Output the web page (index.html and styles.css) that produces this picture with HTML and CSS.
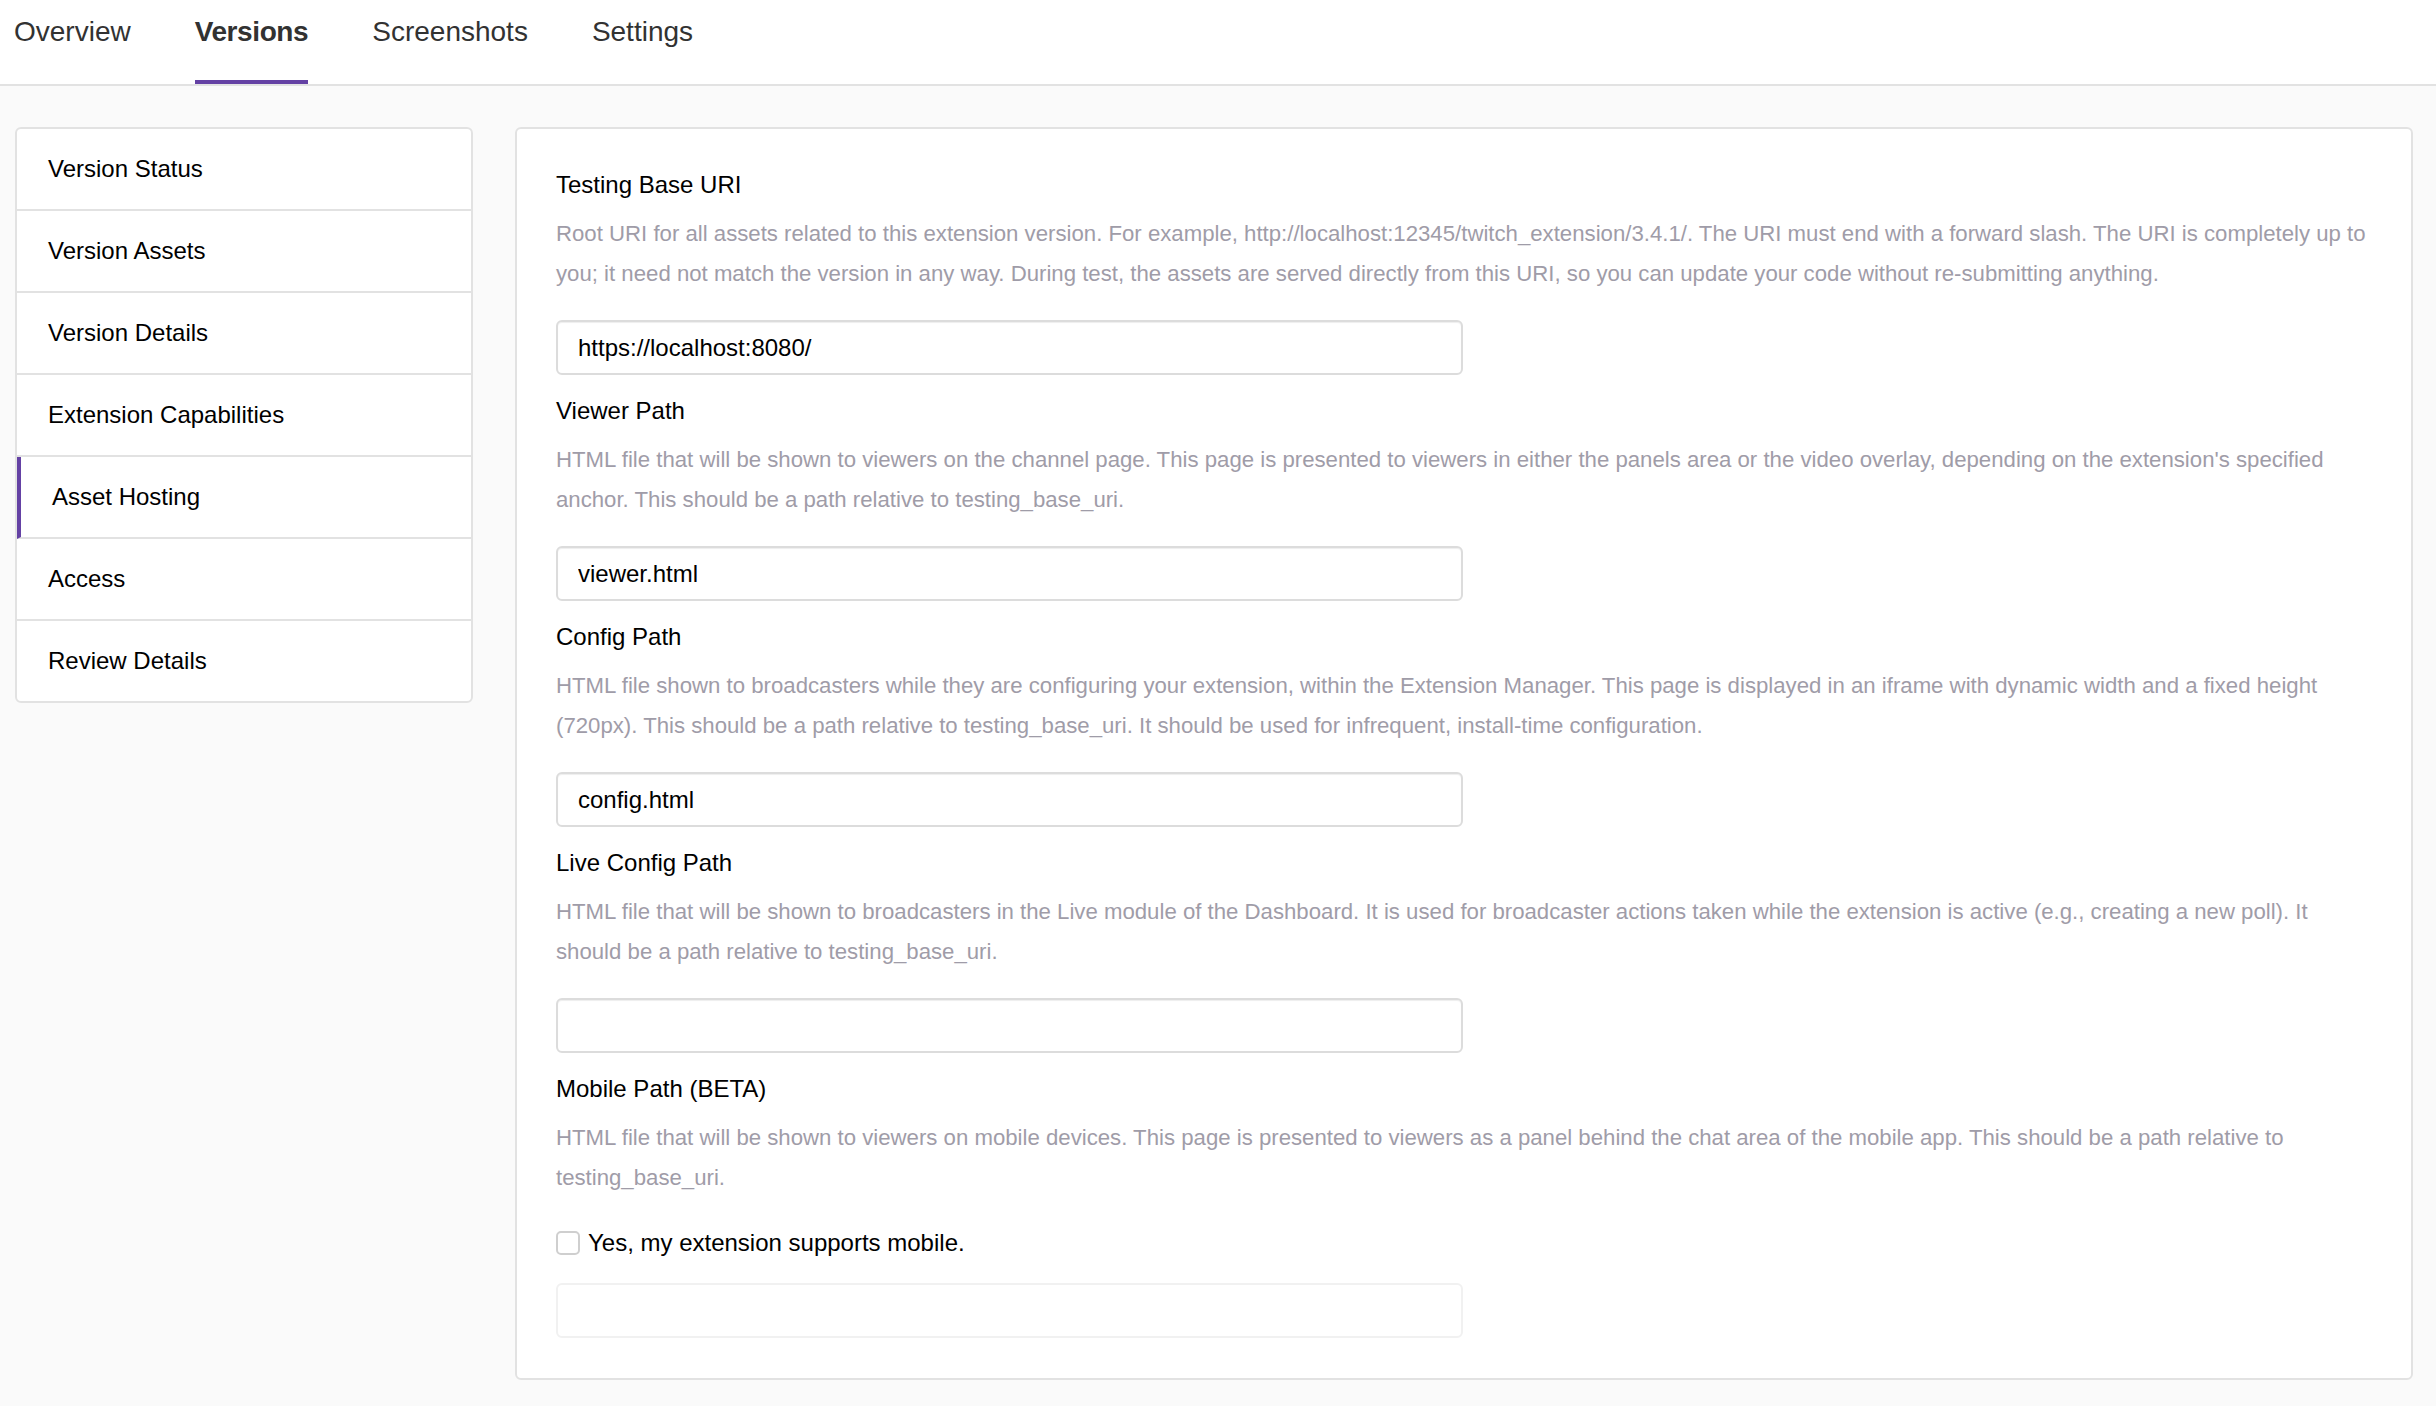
FILE: index.html
```html
<!DOCTYPE html>
<html lang="en">
<head>
<meta charset="utf-8">
<title>Versions - Asset Hosting</title>
<link rel="stylesheet" href="styles.css">
</head>
<body>
<nav class="tabs">
  <a class="tab">Overview</a>
  <a class="tab active">Versions</a>
  <a class="tab">Screenshots</a>
  <a class="tab">Settings</a>
</nav>
<div class="layout">
  <ul class="sidenav">
    <li class="side-item">Version Status</li>
    <li class="side-item">Version Assets</li>
    <li class="side-item">Version Details</li>
    <li class="side-item">Extension Capabilities</li>
    <li class="side-item active">Asset Hosting</li>
    <li class="side-item">Access</li>
    <li class="side-item">Review Details</li>
  </ul>
  <main class="panel">
    <section class="field">
      <div class="field-label">Testing Base URI</div>
      <p class="field-desc">Root URI for all assets related to this extension version. For example, http://localhost:12345/twitch_extension/3.4.1/. The URI must end with a forward slash. The URI is completely up to you; it need not match the version in any way. During test, the assets are served directly from this URI, so you can update your code without re-submitting anything.</p>
      <input class="text-input" type="text" value="https://localhost:8080/">
    </section>
    <section class="field">
      <div class="field-label">Viewer Path</div>
      <p class="field-desc">HTML file that will be shown to viewers on the channel page. This page is presented to viewers in either the panels area or the video overlay, depending on the extension's specified anchor. This should be a path relative to testing_base_uri.</p>
      <input class="text-input" type="text" value="viewer.html">
    </section>
    <section class="field">
      <div class="field-label">Config Path</div>
      <p class="field-desc">HTML file shown to broadcasters while they are configuring your extension, within the Extension Manager. This page is displayed in an iframe with dynamic width and a fixed height (720px). This should be a path relative to testing_base_uri. It should be used for infrequent, install-time configuration.</p>
      <input class="text-input" type="text" value="config.html">
    </section>
    <section class="field">
      <div class="field-label">Live Config Path</div>
      <p class="field-desc">HTML file that will be shown to broadcasters in the Live module of the Dashboard. It is used for broadcaster actions taken while the extension is active (e.g., creating a new poll). It should be a path relative to testing_base_uri.</p>
      <input class="text-input" type="text" value="">
    </section>
    <section class="field last">
      <div class="field-label">Mobile Path (BETA)</div>
      <p class="field-desc">HTML file that will be shown to viewers on mobile devices. This page is presented to viewers as a panel behind the chat area of the mobile app. This should be a path relative to testing_base_uri.</p>
      <label class="check-row"><input class="check" type="checkbox"><span>Yes, my extension supports mobile.</span></label>
      <input class="text-input disabled" type="text" value="" disabled>
    </section>
  </main>
</div>
</body>
</html>
```
FILE: styles.css
```css
* { box-sizing: border-box; }
html, body { margin: 0; padding: 0; }
body {
  background: #fafafa;
  font-family: "Liberation Sans", Arial, Helvetica, sans-serif;
  color: #000;
}
.tabs {
  display: flex;
  gap: 64px;
  height: 86px;
  padding-left: 14px;
  background: #fff;
  border-bottom: 2px solid #e2e2e2;
}
.tab {
  display: block;
  height: 84px;
  padding-top: 14px;
  font-size: 28px;
  line-height: 36px;
  color: #323232;
  border-bottom: 4px solid transparent;
}
.tab.active {
  font-weight: bold;
  letter-spacing: -0.4px;
  border-bottom-color: #6441a4;
}
.layout {
  display: flex;
  align-items: flex-start;
  gap: 42px;
  padding: 41px 23px 28px 15px;
}
.sidenav {
  list-style: none;
  margin: 0;
  padding: 0;
  width: 458px;
  flex: none;
  background: #fff;
  border: 2px solid #e2e2e2;
  border-radius: 6px;
}
.side-item {
  height: 82px;
  padding-left: 31px;
  display: flex;
  align-items: center;
  font-size: 24px;
  color: #000;
  border-bottom: 2px solid #e2e2e2;
}
.side-item:last-child { border-bottom: none; height: 80px; }
.side-item.active {
  border-left: 4px solid #6441a4;
  padding-left: 31px;
}
.panel {
  flex: 1;
  background: #fff;
  border: 2px solid #e2e2e2;
  border-radius: 6px;
  padding: 40px 39px 40px 39px;
}
.field { margin-bottom: 20px; }
.field.last { margin-bottom: 0; }
.field-label {
  font-size: 24px;
  line-height: 32px;
  color: #000;
  margin-bottom: 13px;
}
.field-desc {
  margin: 0 0 26px 0;
  font-size: 22.2px;
  line-height: 40px;
  color: #9f9ca8;
}
.text-input {
  display: block;
  width: 907px;
  height: 55px;
  padding: 0 20px;
  border: 2px solid #dcdcdc;
  border-radius: 6px;
  background: #fff;
  box-shadow: inset 0 1px 1px rgba(0,0,0,0.07);
  font-family: "Liberation Sans", Arial, sans-serif;
  font-size: 24px;
  color: #000;
  outline: none;
}
.text-input.disabled {
  border-color: #f1f1f1;
  box-shadow: none;
}
.check-row {
  display: flex;
  align-items: center;
  gap: 8px;
  height: 32px;
  margin: 29px 0 24px 0;
  font-size: 24px;
  color: #000;
}
.check {
  appearance: none;
  -webkit-appearance: none;
  margin: 0;
  width: 24px;
  height: 24px;
  border: 2px solid #cfcfcf;
  border-radius: 5px;
  background: #fff;
}
```
